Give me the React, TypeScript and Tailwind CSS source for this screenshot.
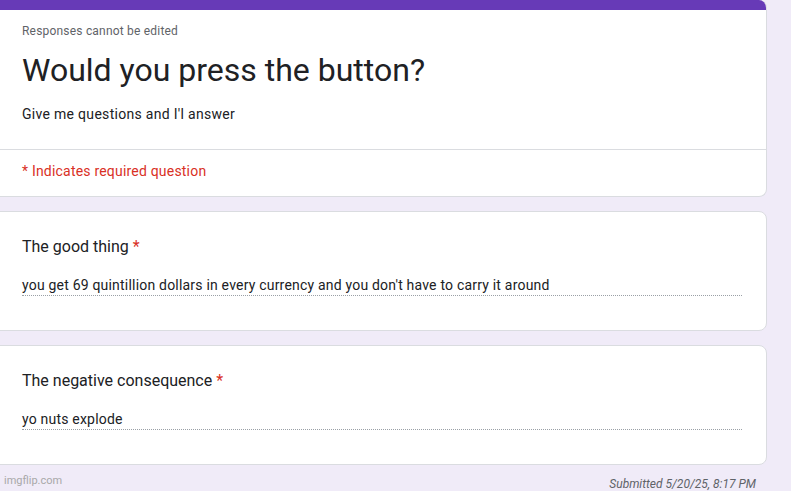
const Required = () => <span className="text-[#d93025]"> *</span>;

type Question = { title: string; answer: string };

const questions: Question[] = [
  {
    title: 'The good thing',
    answer: "you get 69 quintillion dollars in every currency and you don't have to carry it around",
  },
  { title: 'The negative consequence', answer: 'yo nuts explode' },
];

const QuestionCard = ({ q }: { q: Question }) => (
  <div className="-ml-2 w-[775px] rounded-lg border border-[#dadce0] bg-white pl-[29px] pr-[24px] pt-[23px] pb-[34px]">
    <div className="text-[16px] leading-6 text-[#202124]">
      {q.title}
      <Required />
    </div>
    <div className="mt-[16px] border-b border-dotted border-[#9aa0a6] text-[14px] leading-5 tracking-[0.2px] text-[#202124]">
      {q.answer}
    </div>
  </div>
);

export default function App() {
  return (
    <div className="relative h-[491px] w-[791px] overflow-hidden bg-[#f0ebf8] font-['Roboto',sans-serif]">
      <div className="flex flex-col gap-[14px]">
        {/* Header card */}
        <div className="-ml-2 w-[775px] overflow-hidden rounded-lg border border-t-0 border-[#dadce0] bg-white">
          <div className="h-[10px] bg-[#673ab7]" />
          <div className="border-b border-[#dadce0] pl-[29px] pr-6 pt-[13px] pb-[25px]">
            <div className="text-[12px] leading-4 tracking-[0.2px] text-[#5f6368]">Responses cannot be edited</div>
            <div className="mt-[11px] text-[32px] leading-10 text-[#202124]">Would you press the button?</div>
            <div className="mt-[14px] text-[14px] leading-5 tracking-[0.3px] text-[#202124]">Give me questions and I'l answer</div>
          </div>
          <div className="pl-[29px] pt-[11px] pb-[15px] text-[14px] leading-5 tracking-[0.2px] text-[#d93025]">
            * Indicates required question
          </div>
        </div>

        {questions.map((q) => (
          <QuestionCard key={q.title} q={q} />
        ))}
      </div>

      <div className="flex items-start justify-between pl-[4px] pr-[35px]">
        <span className="mt-[8px] text-[11px] leading-4 text-[#a8a8a8]">imgflip.com</span>
        <span className="mt-[11px] text-[12px] italic leading-4 text-[#5f6368]">Submitted 5/20/25, 8:17 PM</span>
      </div>
    </div>
  );
}
